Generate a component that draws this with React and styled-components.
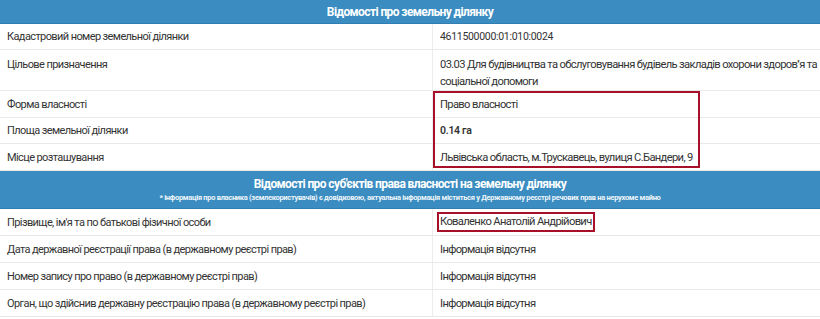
import React from "react";
import styled, { createGlobalStyle } from "styled-components";

const Global = createGlobalStyle`
  html, body { margin: 0; padding: 0; background: #ffffff; }
  body { font-family: Roboto, "Liberation Sans", sans-serif; color: #333333; }
`;

const Page = styled.div`
  width: 820px;
  overflow: hidden;
`;

const Section = styled.div`
  position: relative;
  display: flex;
  flex-direction: column;
`;

const Header = styled.div`
  background: #3a8cc1;
  color: #ffffff;
  text-align: center;
  display: flex;
  flex-direction: column;
  justify-content: center;
  height: ${(p) => p.$h}px;
  border-bottom: 1px solid #2f7fb3;
  box-sizing: border-box;
`;

const HeaderTitle = styled.div`
  font-size: 12px;
  font-weight: 700;
  letter-spacing: -0.6px;
  line-height: 16px;
`;

const HeaderNote = styled.div`
  font-size: 7.5px;
  font-weight: 700;
  letter-spacing: -0.3px;
  line-height: 12px;
  color: #eef6fb;
`;

const Row = styled.div`
  display: grid;
  grid-template-columns: 432px 1fr;
  border-bottom: 1px solid #e9e9e9;
  min-height: ${(p) => p.$h}px;
  box-sizing: border-box;
`;

const Cell = styled.div`
  font-size: 11px;
  letter-spacing: -0.6px;
  line-height: 17px;
  padding: ${(p) => (p.$top ? "6px" : "0")} 7px 0 7px;
  display: flex;
  align-items: ${(p) => (p.$top ? "flex-start" : "center")};
  color: #333333;
`;

const ValueCell = styled(Cell)`
  border-left: 1px solid #ececec;
  font-weight: ${(p) => (p.$bold ? 600 : 400)};
  font-size: ${(p) => (p.$small ? "10.5px" : "11.2px")};
  letter-spacing: ${(p) => (p.$small ? "-0.3px" : "-0.66px")};
  padding-right: 0;
`;

const Boxed = styled.span`
  border: 2px solid #a8102a;
  padding: 0 1px 0 1px;
  margin-left: -3px;
  line-height: 16px;
`;

const Mark = styled.div`
  position: absolute;
  border: 2px solid #a8102a;
  box-sizing: border-box;
  pointer-events: none;
`;

const landRows = [
  { label: "Кадастровий номер земельної ділянки", value: "4611500000:01:010:0024", h: 26, small: true },
  {
    label: "Цільове призначення",
    value: "03.03 Для будівництва та обслуговування будівель закладів охорони здоров''я та соціальної допомоги",
    h: 41,
    top: true,
  },
  { label: "Форма власності", value: "Право власності", h: 27 },
  { label: "Площа земельної ділянки", value: "0.14 га", h: 26, bold: true, small: true },
  { label: "Місце розташування", value: "Львівська область, м.Трускавець, вулиця С.Бандери, 9", h: 27 },
];

const ownerRows = [
  { label: "Прізвище, ім'я та по батькові фізичної особи", value: "Коваленко Анатолій Андрійович", h: 27, boxed: true },
  { label: "Дата державної реєстрації права (в державному реєстрі прав)", value: "Інформація відсутня", h: 27 },
  { label: "Номер запису про право (в державному реєстрі прав)", value: "Інформація відсутня", h: 27 },
  { label: "Орган, що здійснив державну реєстрацію права (в державному реєстрі прав)", value: "Інформація відсутня", h: 27 },
];

function DataRow({ r }) {
  return (
    <Row $h={r.h}>
      <Cell $top={r.top}>{r.label}</Cell>
      <ValueCell $top={r.top} $bold={r.bold} $small={r.small}>
        {r.boxed ? <Boxed>{r.value}</Boxed> : <span>{r.value}</span>}
      </ValueCell>
    </Row>
  );
}

export default function App() {
  return (
    <Page>
      <Global />
      <Section>
        <Header $h={24}>
          <HeaderTitle>Відомості про земельну ділянку</HeaderTitle>
        </Header>
        {landRows.map((r) => (
          <DataRow key={r.label} r={r} />
        ))}
        <Mark style={{ left: 433, top: 91, width: 267, height: 77 }} />
      </Section>
      <Section>
        <Header $h={38}>
          <HeaderTitle>Відомості про суб'єктів права власності на земельну ділянку</HeaderTitle>
          <HeaderNote>
            * інформація про власника (землекористувачів) є довідковою, актуальна інформація міститься у Державному реєстрі речових прав на нерухоме майно
          </HeaderNote>
        </Header>
        {ownerRows.map((r) => (
          <DataRow key={r.label} r={r} />
        ))}
      </Section>
    </Page>
  );
}
